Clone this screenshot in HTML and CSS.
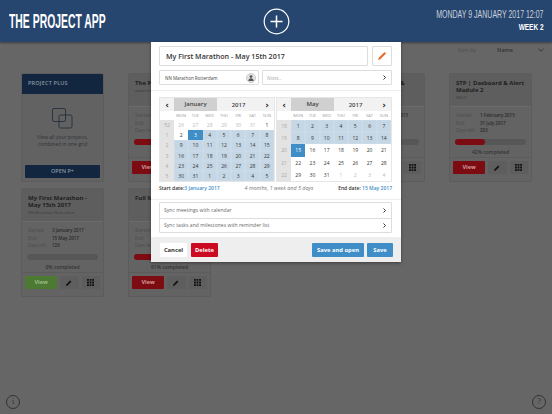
FILE: index.html
```html
<!DOCTYPE html>
<html lang="en">
<head>
  <meta charset="UTF-8" />
  <title>The Project App</title>
  <link rel="stylesheet" href="styles.css">
</head>
<body>
  <header class="topbar">
    <div class="brand">THE PROJECT APP</div>
    <div class="add-btn">
      <svg width="27" height="27" viewBox="0 0 27 27"><circle cx="13.5" cy="13.5" r="12.3" fill="none" stroke="#fff" stroke-width="1.2"/><path d="M13.5 7.5v12M7.500 13.5h12" stroke="#fff" stroke-width="1.5"/></svg>
    </div>
    <div class="clock">
      <div class="clock-date">MONDAY 9 JANUARY 2017 12:07</div>
      <div class="clock-week">WEEK 2</div>
    </div>
  </header>

  <div class="sortbar">
    <span class="sort-label">Sort by</span>
    <span class="sort-value">Name</span>
    <svg class="sort-arrow" width="6" height="4" viewBox="0 0 6 4"><path d="M.5.8 3 3.2 5.500.8" fill="none" stroke="#333" stroke-width=".9"/></svg>
  </div>

  <main class="grid">
    <section class="card plus-card">
      <div class="plus-head">PROJECT PLUS</div>
      <div class="plus-body">
        <svg width="21" height="21" viewBox="0 0 21 21" fill="none" stroke="#2a3440" stroke-width="1"><rect x=".5" y=".5" width="13" height="13" rx="1.5"/><rect x="7" y="7" width="13" height="13" rx="1.5"/></svg>
        <p>View all your projects, combined in one grid</p>
      </div>
      <div class="plus-btn">OPEN P+</div>
    </section>

    <section class="card">
      <div class="card-head"><h3>The Project App</h3><small>www.theprojectapp.com</small></div>
      <div class="card-info">
        <div><span>Started:</span></div>
        <div><span>End:</span></div>
        <div><span>Days left:</span></div>
      </div>
      <div class="bar"><i class="fill-red" style="width:50%"></i></div>
      <div class="pct"></div>
      <div class="card-actions"><a class="view red">View</a></div>
    </section>

    <section class="card"></section>

    <section class="card">
      <div class="card-head card-head-end"><h3>STP | Dashboard &amp; Alert</h3></div>
      <div class="card-info card-info-end">
        <div>2015</div>
      </div>
      <div class="bar"></div>
      <div class="pct"></div>
      <div class="card-actions card-actions-end"><a class="tool"><svg class="ico-grid" viewBox="0 0 9 9"><path d="M0 0h2.4v2.4H0zM3.3 0h2.4v2.400H3.3zM6.6 0H9v2.4H6.6zM0 3.3h2.4v2.4H0zM3.3 3.3h2.4v2.4H3.3zM6.6 3.3H9v2.4H6.6zM0 6.6h2.4V9H0zM3.3 6.6h2.4V9H3.3zM6.6 6.600H9V9H6.6z"/></svg></a></div>
    </section>

    <section class="card">
      <div class="card-head"><h3>STP | Dasboard &amp; Alert Module 2</h3><small>NN IP</small></div>
      <div class="card-info">
        <div><span>Started:</span><b>1 February 2015</b></div>
        <div><span>End:</span><b>31 July 2017</b></div>
        <div><span>Days left:</span><b>203</b></div>
      </div>
      <div class="bar"><i class="fill-red" style="width:42%"></i></div>
      <div class="pct">42% completed</div>
      <div class="card-actions"><a class="view red">View</a><a class="tool"><svg class="ico-pen" viewBox="0 0 8 8"><path d="M0 8l.6-2.2L5.6.8l1.6 1.6-5 5z"/></svg></a><a class="tool"><svg class="ico-grid" viewBox="0 0 9 9"><path d="M0 0h2.4v2.4H0zM3.3 0h2.4v2.4H3.3zM6.6 0H9v2.4H6.6zM0 3.3h2.4v2.4H0zM3.3 3.3h2.4v2.4H3.3zM6.6 3.3H9v2.4H6.6zM0 6.6h2.4V9H0zM3.3 6.6h2.4V9H3.3zM6.6 6.6H9V9H6.6z"/></svg></a></div>
    </section>

    <section class="card">
      <div class="card-head"><h3>My First Marathon - May 15th 2017</h3><small>NN Marathon Rotterdam</small></div>
      <div class="card-info">
        <div><span>Started:</span><b>3 January 2017</b></div>
        <div><span>End:</span><b>15 May 2017</b></div>
        <div><span>Days left:</span><b>126</b></div>
      </div>
      <div class="bar"></div>
      <div class="pct">0% completed</div>
      <div class="card-actions"><a class="view green">View</a><a class="tool"><svg class="ico-pen" viewBox="0 0 8 8"><path d="M0 8l.6-2.2L5.6.8l1.6 1.6-5 5z"/></svg></a><a class="tool"><svg class="ico-grid" viewBox="0 0 9 9"><path d="M0 0h2.4v2.4H0zM3.3 0h2.4v2.4H3.3zM6.6 0H9v2.4H6.6zM0 3.3h2.4v2.4H0zM3.3 3.3h2.4v2.4H3.3zM6.6 3.3H9v2.4H6.6zM0 6.6h2.4V9H0zM3.3 6.6h2.4V9H3.3zM6.6 6.6H9V9H6.6z"/></svg></a></div>
    </section>

    <section class="card">
      <div class="card-head"><h3>Full M</h3></div>
      <div class="card-info">
        <div><span>Started:</span></div>
        <div><span>End:</span></div>
        <div><span>Days left:</span></div>
      </div>
      <div class="bar"><i class="fill-red" style="width:61%"></i></div>
      <div class="pct">61% completed</div>
      <div class="card-actions"><a class="view red">View</a><a class="tool"><svg class="ico-pen" viewBox="0 0 8 8"><path d="M0 8l.6-2.2L5.6.8l1.6 1.6-5 5z"/></svg></a><a class="tool"><svg class="ico-grid" viewBox="0 0 9 9"><path d="M0 0h2.4v2.4H0zM3.3 0h2.4v2.4H3.3zM6.6 0H9v2.4H6.6zM0 3.3h2.4v2.4H0zM3.3 3.3h2.4v2.4H3.3zM6.6 3.3H9v2.4H6.6zM0 6.6h2.4V9H0zM3.3 6.6h2.4V9H3.3zM6.6 6.6H9V9H6.6z"/></svg></a></div>
    </section>
  </main>

  <div class="corner corner-left">i</div>
  <div class="corner corner-right">?</div>

  <!-- edit project dialog -->
  <div class="modal">
    <div class="modal-top">
      <div class="title-row">
        <div class="title-input">My First Marathon - May 15th 2017</div>
        <div class="pen-btn"><svg width="8" height="8" viewBox="0 0 9 9"><path d="M0 9l.9-2.6L6.8.5a1 1 0 0 1 1.4 0l.3.3a1 1 0 0 1 0 1.400L2.6 8.1z" fill="#e8692c"/></svg></div>
      </div>
      <div class="meta-row">
        <div class="client-input">NN Marathon Rotterdam
          <span class="client-ico"><svg width="6" height="6" viewBox="0 0 6 6"><circle cx="3" cy="1.6" r="1.4" fill="#555"/><path d="M.4 6c0-2 1-2.8 2.6-2.8S5.600 4 5.600 6z" fill="#555"/></svg></span>
        </div>
        <div class="notes-input"><span>Notes...</span><svg class="chev" width="3" height="5" viewBox="0 0 3 5"><path d="M.5.5 2.500 2.500.5 4.500" fill="none" stroke="#333" stroke-width="1"/></svg></div>
      </div>
    </div>

    <div class="cals">
      <div class="cal">
        <div class="cal-head"><span class="nav">‹</span><span class="month">January</span><span class="year">2017</span><span class="nav">›</span></div>
        <div class="cal-grid">
          <span class="wk"></span><span class="dow">MON</span><span class="dow">TUE</span><span class="dow">WED</span><span class="dow">THU</span><span class="dow">FRI</span><span class="dow">SAT</span><span class="dow">SUN</span>
          <span class="wk">52</span><span class="off">26</span><span class="off">27</span><span class="off">28</span><span class="off">29</span><span class="off">30</span><span class="off">31</span><span>1</span>
          <span class="wk">1</span><span>2</span><span class="pick">3</span><span class="sel">4</span><span class="sel">5</span><span class="sel">6</span><span class="sel">7</span><span class="sel">8</span>
          <span class="wk">2</span><span class="sel">9</span><span class="sel">10</span><span class="sel">11</span><span class="sel">12</span><span class="sel">13</span><span class="sel">14</span><span class="sel">15</span>
          <span class="wk">3</span><span class="sel">16</span><span class="sel">17</span><span class="sel">18</span><span class="sel">19</span><span class="sel">20</span><span class="sel">21</span><span class="sel">22</span>
          <span class="wk">4</span><span class="sel">23</span><span class="sel">24</span><span class="sel">25</span><span class="sel">26</span><span class="sel">27</span><span class="sel">28</span><span class="sel">29</span>
          <span class="wk">5</span><span class="sel">30</span><span class="sel">31</span><span class="sel">1</span><span class="sel">2</span><span class="sel">3</span><span class="sel">4</span><span class="sel">5</span>
        </div>
      </div>
      <div class="cal">
        <div class="cal-head"><span class="nav">‹</span><span class="month">May</span><span class="year">2017</span><span class="nav">›</span></div>
        <div class="cal-grid">
          <span class="wk"></span><span class="dow">MON</span><span class="dow">TUE</span><span class="dow">WED</span><span class="dow">THU</span><span class="dow">FRI</span><span class="dow">SAT</span><span class="dow">SUN</span>
          <span class="wk">18</span><span class="sel">1</span><span class="sel">2</span><span class="sel">3</span><span class="sel">4</span><span class="sel">5</span><span class="sel">6</span><span class="sel">7</span>
          <span class="wk">19</span><span class="sel">8</span><span class="sel">9</span><span class="sel">10</span><span class="sel">11</span><span class="sel">12</span><span class="sel">13</span><span class="sel">14</span>
          <span class="wk">20</span><span class="pick">15</span><span>16</span><span>17</span><span>18</span><span>19</span><span>20</span><span>21</span>
          <span class="wk">21</span><span>22</span><span>23</span><span>24</span><span>25</span><span>26</span><span>27</span><span>28</span>
          <span class="wk">22</span><span>29</span><span>30</span><span>31</span><span class="off">1</span><span class="off">2</span><span class="off">3</span><span class="off">4</span>
        </div>
      </div>
    </div>

    <div class="range-row">
      <div><b>Start date:</b><span class="date-link">3 January 2017</span></div>
      <em>4 months, 1 week and 5 days</em>
      <div><b>End date:</b> <span class="date-link">15 May 2017</span></div>
    </div>

    <div class="sync-list">
      <div class="sync-item"><span>Sync meetings with calendar</span><svg class="chev" width="3" height="5" viewBox="0 0 3 5"><path d="M.5.5 2.500 2.500.5 4.500" fill="none" stroke="#333" stroke-width="1"/></svg></div>
      <div class="sync-item"><span>Sync tasks and milestones with reminder list</span><svg class="chev" width="3" height="5" viewBox="0 0 3 5"><path d="M.5.5 2.500 2.500.5 4.500" fill="none" stroke="#333" stroke-width="1"/></svg></div>
    </div>

    <div class="modal-foot">
      <button class="btn btn-cancel">Cancel</button>
      <button class="btn btn-delete">Delete</button>
      <button class="btn btn-blue btn-open">Save and open</button>
      <button class="btn btn-blue btn-save">Save</button>
    </div>
  </div>
</body>
</html>
```

FILE: styles.css
```css
* {
  box-sizing: border-box;
}

html,
body {
  height: 100%;
}

body {
  margin: 0;
  position: relative;
  overflow: hidden;
  background-color: #666;
  color: #222;
  font-family: "Open Sans", Arial, sans-serif;
}

/* top bar */
.topbar {
  height: 42px;
  padding: 0 9px;
  display: grid;
  grid-template-columns: 1fr auto 1fr;
  align-items: center;
  background-color: #27466f;
  color: #fff;
  box-shadow: 0 1px 2px rgba(0, 0, 0, 0.4);
}

.brand {
  font-family: "Liberation Sans", sans-serif;
  font-weight: bold;
  font-size: 20px;
  transform: scaleX(0.52);
  transform-origin: left center;
  white-space: nowrap;
}

.add-btn {
  display: flex;
}

.clock {
  text-align: right;
  font-family: "Liberation Sans", sans-serif;
  font-size: 10px;
  line-height: 11px;
  white-space: nowrap;
}

.clock-date {
  color: #c8d0da;
  margin-bottom: 2px;
  transform: scaleX(0.7);
  transform-origin: right center;
}

.clock-week {
  font-size: 9px;
  font-weight: bold;
  transform: scaleX(0.72);
  transform-origin: right center;
}

/* sort */
.sortbar {
  height: 16px;
  padding-right: 8px;
  display: flex;
  justify-content: flex-end;
  align-items: center;
  font-size: 5.5px;
}

.sort-label {
  color: #4c4c4c;
}

.sort-value {
  margin-left: 21px;
  font-weight: 600;
  color: #333;
}

.sort-arrow {
  margin-left: 25px;
}

/* project grid */
.grid {
  margin: 15px 0 0 21px;
  display: grid;
  grid-template-columns: repeat(5, 83px);
  grid-auto-rows: 109px;
  column-gap: 24px;
  row-gap: 6px;
}

.card {
  background-color: #636363;
  border: 1px solid #5c5c5c;
  border-radius: 2px;
  display: flex;
  flex-direction: column;
  overflow: hidden;
}

.card-head {
  height: 32px;
  padding: 6px 6px 0;
  flex-shrink: 0;
  background-color: #5e5e5e;
}

.card-head h3 {
  margin: 0;
  font-size: 6px;
  line-height: 7px;
  font-weight: 700;
  color: #1f1f1f;
}

.card-head small {
  display: block;
  margin-top: 1px;
  font-size: 4px;
  line-height: 5px;
  color: #3c3c3c;
}

.card-info {
  padding: 5px 6px 0;
  height: 30px;
  border-top: 1px solid #6b6b6b;
  font-size: 4.5px;
  line-height: 7.6px;
}

.card-info div {
  display: flex;
}

.card-info span {
  width: 24px;
  color: #4c4c4c;
}

.card-info b {
  font-weight: 600;
  color: #2a2a2a;
}

.card-info-end {
  color: #2a2a2a;
  font-weight: 600;
  text-align: right;
}

.card-info-end div {
  justify-content: flex-end;
  padding-right: 10px;
}

.bar {
  margin: 3px 5px 0;
  height: 6px;
  border-radius: 3px;
  background-color: #575757;
  flex-shrink: 0;
}

.bar i {
  display: block;
  height: 100%;
  border-radius: 3px;
}

.fill-red {
  background-color: #7c0b12;
}

.pct {
  margin-top: 3px;
  height: 10px;
  text-align: center;
  font-size: 5px;
  line-height: 8px;
  font-weight: 600;
  color: #333;
  border-bottom: 1px solid #5c5c5c;
}

.card-actions {
  padding: 3px 3px 0;
  display: flex;
  gap: 3px;
}

.card-actions-end {
  justify-content: flex-end;
}

.card-actions-end .tool {
  flex: 0 0 18px;
}

.view {
  width: 32px;
  height: 13px;
  border-radius: 1px;
  text-align: center;
  font-size: 5.5px;
  line-height: 13px;
  font-weight: 700;
}

.view.red {
  background-color: #7c0b12;
  color: #d49a9c;
}

.view.green {
  background-color: #4c7a32;
  color: #9dbb8c;
}

.tool {
  flex: 1;
  height: 13px;
  border-radius: 1px;
  background-color: #5e5e5e;
  display: flex;
  align-items: center;
  justify-content: center;
}

.ico-pen {
  width: 6px;
  height: 6px;
  fill: #111;
}

.ico-grid {
  width: 7px;
  height: 7px;
  fill: #111;
}

/* project plus */
.plus-card {
  background-color: #626262;
}

.plus-head {
  height: 20px;
  padding: 5px 6px;
  background-color: #12263f;
  color: #8b95a3;
  font-size: 5.5px;
  font-weight: 600;
  letter-spacing: 0.2px;
}

.plus-body {
  height: 71px;
  padding-top: 14px;
  text-align: center;
}

.plus-body svg {
  display: block;
  margin: 0 auto;
}

.plus-body p {
  margin: 5px 4px 0;
  font-size: 5px;
  line-height: 6.5px;
  color: #2f3338;
}

.plus-btn {
  height: 13px;
  margin: 0 3px;
  border-radius: 1px;
  background-color: #12263f;
  color: #8b95a3;
  text-align: center;
  font-size: 5.5px;
  line-height: 13px;
  font-weight: 600;
}

/* bottom corners */
.corner {
  position: absolute;
  bottom: 5px;
  width: 14px;
  height: 14px;
  border: 1px solid #333;
  border-radius: 50%;
  text-align: center;
  font-family: "Liberation Serif", serif;
  font-size: 8px;
  line-height: 12px;
  color: #333;
}

.corner-left {
  left: 6px;
}

.corner-right {
  right: 6px;
}

/* dialog */
.modal {
  position: absolute;
  top: 42px;
  left: 151px;
  width: 250px;
  height: 220px;
  background-color: #fff;
  box-shadow: 0 1px 3px rgba(0, 0, 0, 0.4);
  display: flex;
  flex-direction: column;
}

.modal-top {
  height: 49px;
  padding: 4px 9px 0 8px;
  border-bottom: 1px solid #eee;
}

.title-row {
  display: flex;
  gap: 4px;
}

.title-input {
  flex: 1;
  height: 20px;
  padding-left: 6px;
  border: 1px solid #ddd;
  border-radius: 1px;
  font-size: 7.1px;
  line-height: 18px;
  font-weight: 600;
  color: #333;
}

.pen-btn {
  width: 20px;
  height: 20px;
  border: 1px solid #ddd;
  border-radius: 1px;
  display: flex;
  align-items: center;
  justify-content: center;
}

.meta-row {
  margin-top: 4px;
  display: flex;
  gap: 3px;
}

.client-input,
.notes-input {
  height: 15px;
  border: 1px solid #ddd;
  border-radius: 1px;
  display: flex;
  align-items: center;
  justify-content: space-between;
  font-size: 4.5px;
}

.client-input {
  width: 100px;
  padding: 0 2px 0 5px;
  color: #444;
}

.client-ico {
  width: 10px;
  height: 10px;
  border-radius: 50%;
  border: 1px solid #ccc;
  background-color: #e4e4e4;
  display: flex;
  align-items: center;
  justify-content: center;
}

.notes-input {
  flex: 1;
  padding: 0 5px 0 4px;
  color: #aaa;
  font-style: italic;
}

.chev {
  flex-shrink: 0;
}

.cals {
  padding: 6px 9px 0 8px;
  display: flex;
  justify-content: space-between;
}

.cal {
  width: 116px;
  border: 1px solid #e6e6e6;
}

.cal-head {
  height: 13px;
  display: grid;
  grid-template-columns: 14px 43px 1fr 14px;
  align-items: center;
  text-align: center;
  background-color: #f2f2f2;
  font-size: 6px;
  font-weight: 600;
  color: #444;
}

.nav {
  font-family: "DejaVu Sans", sans-serif;
  font-size: 9px;
  line-height: 10px;
  font-weight: bold;
  color: #222;
}

.month {
  height: 100%;
  line-height: 13px;
  background-color: #d0d0d0;
}

.cal-grid {
  height: 70px;
  display: grid;
  grid-template-columns: 14px repeat(7, 1fr);
  grid-template-rows: 9px;
  grid-auto-rows: 1fr;
  font-size: 5px;
  line-height: 6px;
  font-weight: 500;
  color: #333;
}

.cal-grid span {
  display: flex;
  align-items: center;
  justify-content: center;
}

.cal-grid .dow {
  font-size: 4px;
  font-weight: 400;
  color: #999;
}

.cal-grid .wk {
  background-color: #e3e3e3;
  color: #aaa;
  font-weight: 400;
}

.cal-grid .wk:first-child {
  background-color: #fff;
}

.cal-grid .off {
  color: #bbb;
  font-weight: 400;
}

.cal-grid .sel {
  background-color: #c5d6e5;
  box-shadow: inset 0 0 0 0.3px #d9e4ee;
}

.cal-grid .pick {
  background-color: #3f8ec8;
  color: #fff;
}

.range-row {
  height: 18px;
  padding: 0 9px 6px 8px;
  display: flex;
  justify-content: space-between;
  align-items: center;
  font-size: 5px;
  color: #333;
  border-bottom: 1px solid #eee;
}

.range-row b {
  font-weight: 600;
}

.range-row em {
  color: #777;
  font-size: 5.4px;
}

.date-link {
  color: #3f8ec8;
  font-weight: 600;
}

.sync-list {
  margin: 2px 9px 0 8px;
  border: 1px solid #ddd;
  border-radius: 1px;
}

.sync-item {
  height: 14.5px;
  padding: 0 5px 0 4px;
  display: flex;
  justify-content: space-between;
  align-items: center;
  font-size: 5px;
  color: #666;
  letter-spacing: 0.05px;
}

.sync-item + .sync-item {
  border-top: 1px solid #ddd;
}

.modal-foot {
  margin-top: auto;
  height: 25px;
  padding: 0 8px 0 9px;
  display: flex;
  align-items: center;
  background-color: #eee;
}

.btn {
  height: 14px;
  padding: 0;
  border: 0;
  border-radius: 1px;
  font-family: "Open Sans", Arial, sans-serif;
  font-size: 5.8px;
  font-weight: 700;
}

.btn-cancel {
  width: 27px;
  background-color: #fff;
  color: #333;
}

.btn-delete {
  width: 27px;
  margin-left: 4px;
  background-color: #cc0a22;
  color: #fff;
}

.btn-blue {
  background-color: #3f8ec8;
  color: #fff;
}

.btn-open {
  width: 52px;
  margin-left: auto;
}

.btn-save {
  width: 26px;
  margin-left: 3px;
}
```
